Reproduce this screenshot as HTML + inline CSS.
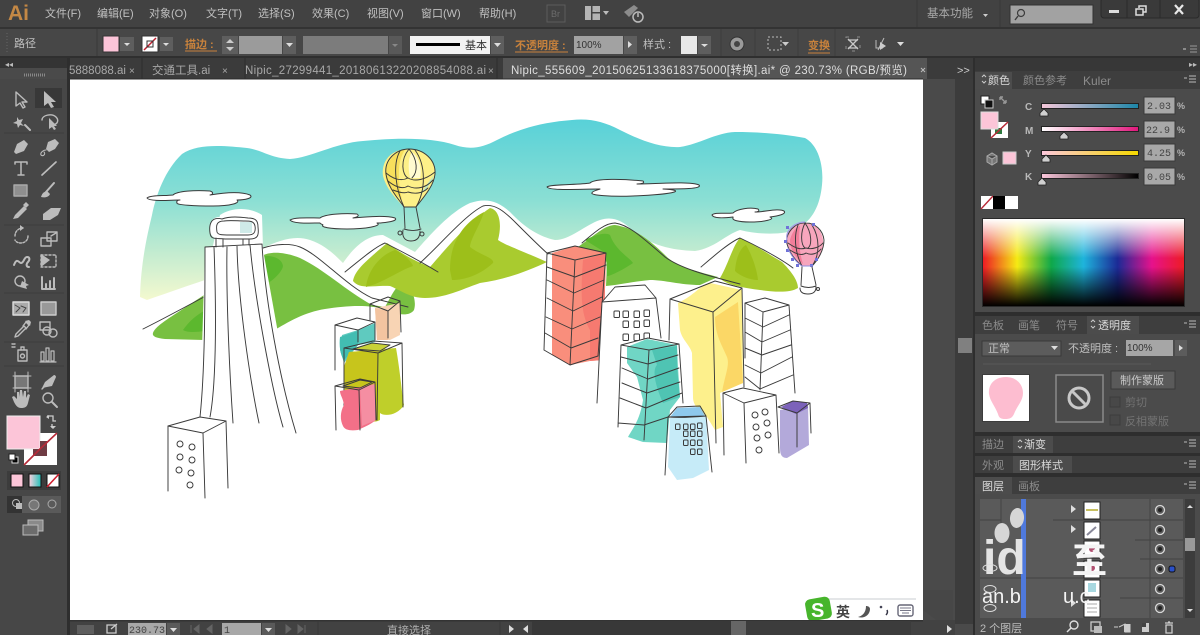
<!DOCTYPE html>
<html><head><meta charset="utf-8"><style>
html,body{margin:0;padding:0;background:#484848;width:1200px;height:635px;overflow:hidden}
svg{display:block;position:absolute;left:0;top:0;filter:blur(.35px)}
text{font-family:"Liberation Sans","Noto Sans CJK SC",sans-serif}
.m{font-size:11px;fill:#c0c0c0}
.o{font-size:11px;fill:#c8823c;font-weight:bold}
.t{font-size:11.5px;fill:#a8a8a8}
.p{font-size:11px;fill:#8c8c8c}
.a{font-size:11px;fill:#dcdcdc}
.n{font-family:"Liberation Mono","Noto Sans CJK SC",monospace;font-size:10px;fill:#444}
.ln{fill:none;stroke:#3a3a3a;stroke-width:.95;stroke-linejoin:round;stroke-linecap:round}
.ic{fill:none;stroke:#bcbcbc;stroke-width:1.4;stroke-linejoin:round;stroke-linecap:round}
.if{fill:#bcbcbc;stroke:none}
</style></head><body>
<svg width="1200" height="635" viewBox="0 0 1200 635" xmlns="http://www.w3.org/2000/svg">
<defs>
<linearGradient id="sky" x1="0" y1="0" x2="0" y2="1"><stop offset="0" stop-color="#58d1d8"/><stop offset=".45" stop-color="#8bdfd4"/><stop offset=".75" stop-color="#c5ecd0"/><stop offset="1" stop-color="#f4f9cf"/></linearGradient>
<linearGradient id="hue" x1="0" y1="0" x2="1" y2="0"><stop offset="0" stop-color="#ed1c24"/><stop offset=".17" stop-color="#f5ea14"/><stop offset=".34" stop-color="#0fa84a"/><stop offset=".5" stop-color="#1eb4dc"/><stop offset=".67" stop-color="#1c2a96"/><stop offset=".84" stop-color="#e6128c"/><stop offset="1" stop-color="#ed1c24"/></linearGradient>
<linearGradient id="lt" x1="0" y1="0" x2="0" y2="1"><stop offset="0" stop-color="#fff"/><stop offset=".45" stop-color="#fff" stop-opacity="0"/><stop offset=".55" stop-color="#000" stop-opacity="0"/><stop offset="1" stop-color="#000"/></linearGradient>
<linearGradient id="sc" x1="0" y1="0" x2="1" y2="0"><stop offset="0" stop-color="#f6c8da"/><stop offset="1" stop-color="#1c86a8"/></linearGradient>
<linearGradient id="sm" x1="0" y1="0" x2="1" y2="0"><stop offset="0" stop-color="#fff"/><stop offset="1" stop-color="#e0187c"/></linearGradient>
<linearGradient id="sy" x1="0" y1="0" x2="1" y2="0"><stop offset="0" stop-color="#fcc8dc"/><stop offset="1" stop-color="#f5d800"/></linearGradient>
<linearGradient id="sk" x1="0" y1="0" x2="1" y2="0"><stop offset="0" stop-color="#fcc8dc"/><stop offset="1" stop-color="#000"/></linearGradient>
<linearGradient id="tm" x1="0" y1="0" x2="1" y2="0"><stop offset="0" stop-color="#fdd0df"/><stop offset="1" stop-color="#21c0b8"/></linearGradient>
</defs>

<!-- base -->
<rect width="1200" height="635" fill="#4a4a4a"/>
<rect width="1200" height="27" fill="#424242"/>
<rect y="27" width="1200" height="2" fill="#333"/>
<rect y="29" width="1200" height="27" fill="#474747"/>
<rect y="56" width="1200" height="2" fill="#2f2f2f"/>
<rect y="58" x="68" width="907" height="21" fill="#3b3b3b"/>
<rect x="0" y="58" width="68" height="577" fill="#474747"/>
<rect x="0" y="58" width="68" height="10" fill="#343434"/>
<rect x="0" y="68" width="68" height="11" fill="#4a4a4a"/>
<rect x="67" y="58" width="3" height="577" fill="#2e2e2e"/>

<!-- menu -->
<text x="8" y="20" font-size="21" font-weight="bold" fill="#c48845">Ai</text>
<text class="m" x="45" y="17">文件(F)</text><text class="m" x="97" y="17">编辑(E)</text><text class="m" x="149" y="17">对象(O)</text><text class="m" x="206" y="17">文字(T)</text><text class="m" x="258" y="17">选择(S)</text><text class="m" x="312" y="17">效果(C)</text><text class="m" x="367" y="17">视图(V)</text><text class="m" x="421" y="17">窗口(W)</text><text class="m" x="479" y="17">帮助(H)</text>
<rect x="547" y="5" width="18" height="17" fill="none" stroke="#5c5c5c"/><text x="551" y="17" font-size="9" fill="#6c6c6c">Br</text>
<rect x="585" y="6" width="15" height="14" fill="#b4b4b4"/><rect x="591" y="6" width="1.500" height="14" fill="#444"/><rect x="592" y="12" width="8" height="1.500" fill="#444"/><path d="M603 11h6l-3 4z" fill="#bbb"/>
<path d="M624 12l10-7 4 3-9 9z" fill="#8c8c8c"/><circle cx="638" cy="17" r="5" fill="none" stroke="#bbb" stroke-width="1.500"/><path d="M638 13v4" stroke="#bbb" stroke-width="1.500"/>
<path d="M917 0v27M1000 0v27" stroke="#383838"/>
<text class="t" x="927" y="17">基本功能</text><path d="M983 14h5l-2.500 3z" fill="#ccc"/>
<rect x="1010" y="5" width="83" height="19" fill="#a2a2a2" stroke="#333"/><circle cx="1021" cy="13" r="3.500" fill="none" stroke="#3c3c3c" stroke-width="1.200"/><path d="M1018 16l-3 4" stroke="#3c3c3c" stroke-width="1.400"/>
<rect x="1101" y="-2" width="98" height="20" rx="3" fill="#3a3a3a" stroke="#2a2a2a"/><path d="M1127 0v18M1160 0v18" stroke="#2a2a2a"/>
<rect x="1109" y="10" width="10" height="3" fill="#ddd"/>
<rect x="1136" y="9" width="7" height="6" fill="none" stroke="#ddd" stroke-width="1.500"/><path d="M1139 8v-2h7v6h-3" fill="none" stroke="#ddd" stroke-width="1.500"/>
<path d="M1175 5l8 9M1183 5l-8 9" stroke="#e8e8e8" stroke-width="2.200"/>

<!-- control bar -->
<path d="M7 33v20" stroke="#666" stroke-dasharray="1 2"/>
<text class="m" x="14" y="47">路径</text>
<path d="M97 29v27" stroke="#3a3a3a"/>
<rect x="103" y="36" width="16" height="16" fill="#fcc4d8" stroke="#333"/><rect x="120" y="37" width="14" height="14" fill="#5e5e5e"/><path d="M124 43h6l-3 3z" fill="#ddd"/>
<rect x="142" y="36" width="16" height="16" fill="#fff" stroke="#333"/><path d="M144 50l12-12" stroke="#c02030" stroke-width="1.500"/><path d="M147 41h6v6h-6z" fill="none" stroke="#333"/><rect x="160" y="37" width="13" height="14" fill="#5e5e5e"/><path d="M163 43h6l-3 3z" fill="#ddd"/>
<text class="o" x="185" y="48">描边 :</text><path d="M185 51h32" stroke="#c8823c"/>
<rect x="222" y="36" width="16" height="18" fill="#5e5e5e"/><path d="M226 43l4-4 4 4zM226 47l4 4 4-4z" fill="#ccc"/>
<rect x="239" y="36" width="43" height="18" fill="#9b9b9b"/><rect x="283" y="36" width="13" height="18" fill="#5e5e5e"/><path d="M286 43h7l-3.500 4z" fill="#ddd"/>
<rect x="303" y="36" width="85" height="18" fill="#7c7c7c"/><rect x="389" y="36" width="13" height="18" fill="#595959"/><path d="M392 44h6l-3 3z" fill="#888"/>
<rect x="410" y="36" width="80" height="18" fill="#f2f2f2"/><rect x="416" y="43" width="44" height="3" fill="#000"/><text x="465" y="49" font-size="11" fill="#333">基本</text>
<rect x="491" y="36" width="13" height="18" fill="#5e5e5e"/><path d="M494 43h7l-3.500 4z" fill="#ddd"/>
<text class="o" x="515" y="49">不透明度 :</text><path d="M515 52h53" stroke="#c8823c"/>
<rect x="574" y="36" width="49" height="18" fill="#a2a2a2"/><text x="576" y="48" font-size="10" fill="#333">100%</text><rect x="624" y="36" width="13" height="18" fill="#5e5e5e"/><path d="M628 41v7l4-3.500z" fill="#ddd"/>
<text class="m" x="643" y="48">样式 :</text>
<rect x="681" y="36" width="16" height="18" fill="#e8e8e8"/><rect x="698" y="36" width="13" height="18" fill="#5e5e5e"/><path d="M701 44h7l-3.500 3z" fill="#ddd"/>
<path d="M721 29v27M755 29v27M798 29v27M835 29v27" stroke="#3e3e3e"/>
<circle cx="737" cy="44" r="7" fill="#9a9a9a" stroke="#333"/><circle cx="737" cy="44" r="3" fill="#444"/>
<rect x="768" y="37" width="13" height="13" fill="none" stroke="#bbb" stroke-dasharray="2 2"/><path d="M782 42h7l-3.500 4z" fill="#ccc"/>
<text x="808" y="49" font-size="11" font-weight="bold" fill="#c8823c">变换</text><path d="M808 53h22" stroke="#c8823c"/>
<path d="M848 39l10 10M858 39l-10 10M848 40h10M848 48h10" stroke="#c8c8c8" stroke-width="1.300" fill="none"/><rect x="846" y="37" width="14" height="14" fill="none" stroke="#8c8c8c" stroke-dasharray="3 8"/>
<path d="M876 40v8h7M884 38l-6 12" stroke="#bbb" fill="none"/><path d="M880 42l6 4-6 4z" fill="#ccc"/><path d="M897 42h7l-3.500 4z" fill="#ddd"/>
<path d="M1190 46h7M1190 49h7M1190 52h7" stroke="#999"/><path d="M1183 49h3" stroke="#ccc"/>

<!-- tabs -->
<text x="5" y="67" font-size="8" fill="#bbb">◂◂</text>
<path d="M24 75h22" stroke="#888" stroke-dasharray="1 1" stroke-width="3"/>
<rect x="503" y="58" width="424" height="21" fill="#555"/>
<path d="M142 58v21M245 58v21M497 58v21" stroke="#2e2e2e"/>
<text class="t" x="69" y="74">5888088.ai</text><text x="129" y="74" font-size="10" fill="#aaa">×</text>
<text class="t" x="152" y="74">交通工具.ai</text><text x="222" y="74" font-size="10" fill="#aaa">×</text>
<text class="t" x="245" y="74" textLength="241">Nipic_27299441_20180613220208854088.ai</text><text x="488" y="74" font-size="10" fill="#aaa">×</text>
<text x="511" y="74" font-size="11.500" fill="#dedede" textLength="396">Nipic_555609_20150625133618375000[转换].ai* @ 230.73% (RGB/预览)</text>
<path d="M921 68l4 4M925 68l-4 4" stroke="#bbb"/>
<text x="957" y="74" font-size="11" fill="#ccc">&gt;&gt;</text>

<!-- canvas -->
<rect x="70" y="79" width="853" height="541" fill="#fff"/>
<rect x="70" y="78" width="853" height="2" fill="#2c2c2c" opacity=".5"/>
<path d="M923 79h32v546h-12l-20-15z" fill="#4a4a4a"/>
<rect x="955" y="79" width="18" height="545" fill="#3c3c3c"/>
<rect x="958" y="338" width="14" height="15" fill="#808080"/>
<path d="M923 590v20l20 15h10V590z" fill="#474747"/>

<!-- artwork -->
<path fill="url(#sky)" d="M140 297C141 260 148 232 152 215C156 195 165 170 182 154C198 143 226 146 247 148C262 150 270 158 290 159C310 158 335 143 363 141C395 138 430 137 455 145C470 150 482 148 497 140C520 128 545 122 572 120C590 118 605 122 620 130C640 140 660 148 680 147C700 144 715 133 735 132C760 132 785 134 805 138C818 145 824 165 822 185C820 205 813 220 797 229C785 235 760 235 740 230C725 235 715 248 695 251C670 250 650 245 632 230C622 220 612 216 600 220C585 225 570 240 555 240C540 237 525 228 510 212C497 200 485 198 470 203C450 212 430 235 415 252L383 235C365 235 352 250 343 263C335 255 325 245 310 240C295 235 280 240 263 248L262 215C250 207 232 207 220 215L205 280C190 285 170 292 147 300Z"/>
<path fill="#78c041" d="M153 333C156 325 170 318 204 295L204 340L165 339C155 338 152 336 153 333ZM262 256C270 251 285 252 300 258C325 270 345 290 372 305L385 307C392 295 396 285 403 283C412 287 417 300 414 310C410 316 400 315 392 312C375 304 350 305 325 309C305 312 288 322 273 331Z"/>
<path fill="#5cb82e" d="M183 330C190 320 197 315 204 311V331C197 332 188 333 183 330ZM262 256C272 255 282 258 283 266C282 273 270 283 264 285Z"/>
<path fill="#a9cb2f" d="M353 281C355 270 365 262 387 243C395 248 405 257 430 267C445 250 465 225 490 208C500 210 502 225 498 240C505 245 520 250 547 262C530 270 505 280 480 283C460 290 445 298 425 298C410 298 400 290 390 286C375 285 360 290 353 281Z"/>
<path fill="#9dbf1a" d="M366 287C368 270 380 255 395 250C405 255 412 262 413 266C400 270 385 282 366 287ZM450 270C450 240 465 222 484 212C480 225 470 240 470 247C480 255 495 258 493 263C480 275 465 280 452 280Z"/>
<path fill="#78c041" d="M578 247C595 235 605 225 615 225C635 228 650 240 668 258C680 268 700 272 718 277L700 285C680 285 665 280 650 280C630 282 618 285 606 286L607 262Z"/>
<path fill="#5cb82e" d="M585 240C595 235 605 232 610 235C615 250 630 258 633 263C620 272 607 277 607 276L606 253Z"/>
<path fill="#a9cb2f" d="M720 278C728 265 733 245 740 238C755 245 770 255 782 262C790 270 798 280 798 288C790 293 775 292 760 290C745 288 725 285 720 278Z"/>
<path fill="#9dbf1a" d="M735 271C736 258 740 248 746 245C752 255 757 270 758 280C750 280 740 276 735 271Z"/>

<!-- mountain lines -->
<path class="ln" d="M143 329C165 318 185 307 204 297M263 248C275 244 290 243 300 247C320 255 345 285 372 298L408 307"/>
<path class="ln" d="M345 272C360 260 375 247 385 243C395 248 415 258 438 272M420 263C440 245 465 215 483 206C495 203 505 212 516 223C525 232 540 247 548 254"/>
<path class="ln" d="M582 243C595 232 605 223 615 223C630 225 645 240 665 257C680 268 705 275 740 284"/>
<path class="ln" d="M701 267C715 255 730 242 740 238C755 245 780 258 793 268"/>

<!-- clouds -->
<g fill="#fff" stroke="#3a3a3a" stroke-linejoin="round">
<path d="M147 198C150 195 165 196 173 195C177 191 195 190 210 191C213 192 214 194 210 195C222 193 240 191 250 195C254 198 245 200 237 200C241 203 230 206 213 206C195 206 176 205 177 203C176 201 178 200 180 200C170 200 150 202 147 198Z"/>
<path d="M290 220C295 217 310 218 320 218C325 214 345 213 357 214C360 216 357 217 353 218C365 217 385 215 395 218C399 221 385 223 377 223C383 226 365 229 347 229C330 229 320 227 323 225C322 224 320 224 320 223C310 223 293 224 290 220Z"/>
<path d="M547 187C550 184 580 185 590 183C595 178 625 179 643 181C645 183 642 184 637 184C655 184 690 181 699 185C703 189 680 189 663 189C685 190 680 194 633 196C610 197 590 195 592 193C592 191 598 190 600 189C580 189 550 191 547 187Z"/>
<path d="M712 215C715 212 725 214 733 213C737 209 750 207 758 209C760 211 758 212 755 212C765 212 778 208 784 211C787 214 778 216 770 217C776 219 765 222 750 222C738 222 732 220 733 218C733 217 733 217 733 217C725 218 714 219 712 215Z"/>
</g>

<!-- tower -->
<path d="M205 247L262 244L296 433L200 417Z" fill="#fff"/>
<rect x="210" y="217" width="49" height="22" rx="9" fill="#fff"/>
<path d="M240 222H252V233H240Z" fill="#cfeae8"/>
<path class="ln" d="M222 219C210 216 209 226 210 233C211 240 215 238 225 239H250C258 239 259 235 258 227C258 220 255 218 248 218C240 217 230 216 222 219Z"/>
<path class="ln" d="M224 221C216 221 216 226 217 232C218 235 222 235 230 235H248C254 235 256 232 255 226C254 221 250 221 245 221C238 221 230 220 224 221Z"/>
<path class="ln" d="M216 238V247M223 239V247M243 239V245M249 239V245"/>
<path class="ln" d="M205 247L262 244M205 247C205 300 205 370 200 417M214 247C216 300 217 380 210 417M227 247C226 300 230 380 233 423M237 246C238 300 250 380 259 423M250 245C255 300 272 390 283 427M262 244C265 300 280 380 296 433"/>
<path class="ln" d="M168 426L200 417L226 421L203 433Z" style="fill:#fff"/>
<path class="ln" d="M168 426V491M203 433L205 498M226 421L228 488"/>
<g class="ln"><circle cx="180" cy="444" r="3"/><circle cx="192" cy="447" r="3"/><circle cx="180" cy="457" r="3"/><circle cx="192" cy="460" r="3"/><circle cx="179" cy="470" r="3"/><circle cx="191" cy="473" r="3"/><circle cx="190" cy="485" r="3"/></g>

<!-- small left buildings -->
<path fill="#f8d4b4" d="M375 308L400 303L400 335L390 340L377 340Z"/><path fill="#f3c4a0" d="M375 308L388 311V340H377Z"/>
<path class="ln" d="M370 304L388 297L400 301L388 311ZM370 304V320M388 311V338M400 301L401 332"/>
<path fill="#5fcabf" d="M342 335L358 330L375 323V342L358 345L344 363L340 350Z"/><path fill="#42bdb2" d="M340 337L358 331V345L344 360C340 355 339 345 340 337Z"/>
<path class="ln" d="M335 325L357 318L375 322L358 330ZM335 325V370M358 330V342M375 322V340"/>
<path fill="#bfcf2a" d="M344 367L349 352L396 348C400 370 402 395 404 405C398 415 385 417 380 413L380 420C372 424 372 420 370 415L345 395Z"/><path fill="#c7c51c" d="M344 367L349 352L378 350V420L370 415L345 395Z"/>
<path fill="#c9d238" d="M352 349L373 343L390 345L380 352Z"/>
<path class="ln" d="M344 348L373 341L402 343L378 353ZM353 349L372 343L390 345L380 351ZM344 348V410M378 353L377 420M402 343L403 407"/>
<path fill="#f37088" d="M340 391L375 384L376 420C370 425 362 428 358 430C350 431 345 430 343 426C340 420 340 412 344 405C343 398 340 395 340 391Z"/><path fill="#f58ea2" d="M360 388L375 384L376 420L362 426Z"/>
<path class="ln" d="M335 386L360 379L375 382L359 390ZM343 386L360 380L372 382L360 388ZM335 386L336 430M359 390L360 430M375 382L376 420"/>

<!-- red building -->
<path fill="#f98e7c" d="M552 253L575 246L606 253L603 360L590 361L570 365L552 355Z"/><path fill="#f67a70" d="M583 260L606 253L603 360L590 361L590 330C582 315 580 300 583 260Z"/>
<path class="ln" d="M547 253L575 246L606 253L575 260ZM547 253L544 350M575 260L570 365M606 253L598 356M547 267L575 277L606 265M547 280L574 293L604 280M547 298L573 311L602 297M546 317L572 329L600 317M545 333L571 348L598 338M544 350L570 365L598 356"/>

<!-- white building windows -->
<path fill="#fff" d="M602 302L615 287L645 285L656 298L661 340H620L597 403Z"/>
<path class="ln" d="M602 302L615 287L645 285L656 298L661 338M602 302L656 298M602 302L597 403"/>
<g fill="none" stroke="#3a3a3a"><rect x="614" y="311" width="5.500" height="6.500" rx="1"/><rect x="623" y="311" width="5.500" height="6.500" rx="1"/><rect x="634" y="311" width="5.500" height="6.500" rx="1"/><rect x="644" y="310" width="5.500" height="6.500" rx="1"/><rect x="623" y="321" width="5.500" height="6.500" rx="1"/><rect x="634" y="321" width="5.500" height="6.500" rx="1"/><rect x="644" y="320" width="5.500" height="6.500" rx="1"/><rect x="623" y="334" width="5.500" height="6.500" rx="1"/><rect x="634" y="334" width="5.500" height="6.500" rx="1"/><rect x="644" y="333" width="5.500" height="6.500" rx="1"/></g>

<!-- yellow building -->
<path fill="#fdf08c" d="M678 303C695 295 700 285 710 283L742 290L743 383L720 393L723 427L715 430L707 417C698 410 693 405 693 397L692 353C690 345 682 340 680 330Z"/>
<path fill="#fbd766" d="M715 317L738 302L743 383L722 392C725 375 730 365 727 357C722 345 715 335 715 317Z"/>
<path class="ln" d="M670 299L715 281L742 288L713 312ZM670 299L669 340M713 312L716 443M742 288L744 387"/>

<!-- teal building -->
<path fill="#fff" d="M621 345L648 338L679 344L683 403L668 417L644 440L618 427Z"/>
<path fill="#70d6c5" d="M627 347L647 339L677 345L678 367L680 397L670 410L667 443L643 442L628 437C633 428 640 420 643 400L637 377L627 363Z"/>
<path fill="#4fc4b3" d="M652 350L677 346L677 367L680 397L663 403C655 385 652 370 657 365Z"/>
<path class="ln" d="M621 345L648 338L679 344L649 350ZM621 345L618 427M649 350L644 440M679 344L683 403M621 357L648 364L678 355M622 368L648 379L679 368M622 383L647 393L680 382M620 398L646 408L682 393M618 423L644 425L668 417"/>

<!-- stripe building -->
<path class="ln" d="M745 303L765 298L789 305L763 312ZM789 305L795 393M763 312L760 390M745 303V358M745 318L763 327L789 315M745 332L762 342L790 330M745 348L762 355L791 345M745 365L761 373L792 357M745 377L760 389L793 375"/>

<!-- purple -->
<path fill="#b3a9da" d="M780 410L808 405L809 445L787 458C780 458 780 452 780 445Z"/>
<path fill="#7c62ba" d="M781 407L793 401L807 403L808 408L796 414Z"/>
<path class="ln" d="M778 407L793 401L810 403L797 413ZM810 403L811 433M797 413V447"/>

<!-- white circle building -->
<path fill="#fff" d="M723 393L743 388L776 395L779 453L746 463L724 455Z"/>
<path class="ln" d="M723 393L743 388L776 395L744 403ZM723 393L724 455M744 403L746 463M776 395L779 453"/>
<g class="ln"><circle cx="765" cy="412" r="3"/><circle cx="755" cy="415" r="3"/><circle cx="767" cy="423" r="3"/><circle cx="756" cy="427" r="3"/><circle cx="768" cy="435" r="3"/><circle cx="757" cy="438" r="3"/><circle cx="759" cy="450" r="3"/></g>

<!-- blue -->
<path fill="#c6ebf8" d="M670 418L706 416L709 470L693 478L677 480L668 467Z"/>
<path fill="#8ec9ec" d="M670 417L677 408L700 407L705 416Z"/>
<path class="ln" d="M668 417L677 407L700 406L706 416ZM668 417C680 418 695 417 706 416M668 417L665 475M706 416L712 472"/>
<g fill="none" stroke="#3a3a3a"><rect x="675.500" y="424" width="4.500" height="5.500" rx="1"/><rect x="683.500" y="424" width="4.500" height="5.500" rx="1"/><rect x="690.500" y="424" width="4.500" height="5.500" rx="1"/><rect x="697.500" y="423" width="4.500" height="5.500" rx="1"/><rect x="683.500" y="431" width="4.500" height="5.500" rx="1"/><rect x="690.500" y="431" width="4.500" height="5.500" rx="1"/><rect x="697.500" y="431" width="4.500" height="5.500" rx="1"/><rect x="683.500" y="440" width="4.500" height="5.500" rx="1"/><rect x="690.500" y="440" width="4.500" height="5.500" rx="1"/><rect x="697.500" y="440" width="4.500" height="5.500" rx="1"/><rect x="690.500" y="449" width="4.500" height="5.500" rx="1"/><rect x="697.500" y="449" width="4.500" height="5.500" rx="1"/></g>

<!-- balloon 1 -->
<path fill="#fdf088" d="M409 149C390 149 381 162 383 176C386 188 395 198 404 207H416C424 198 434 186 435 174C436 160 425 149 409 149Z"/>
<path fill="#f8df5c" d="M385 172C388 158 398 150 405 150C398 160 397 175 402 200C392 192 385 182 385 172Z"/>
<path fill="#fffbd0" d="M412 152C420 158 422 170 420 178L410 178C408 168 408 158 412 152Z"/>
<path fill="#b8e8c8" d="M420 195C426 190 432 182 434 175L428 183Z"/>
<path class="ln" d="M409 149C396 149 384 160 386 174C388 188 398 198 404 207H416C423 198 434 186 435 174C436 160 424 149 409 149Z"/>
<path class="ln" d="M400 151C392 165 396 190 404 207M415 150C426 165 426 190 416 207M409 149C400 160 402 175 408 178M409 149C418 160 418 172 412 178"/>
<path class="ln" d="M386 173C392 178 400 182 408 178C415 182 425 180 435 172M388 181C394 186 402 190 408 186C416 190 426 188 433 180M393 190C398 192 404 194 408 192C414 194 422 194 428 188"/>
<path class="ln" d="M404 207L405 228M416 207L420 228M404 229C410 231 416 231 421 229M403 230C402 236 404 241 411 241C417 241 420 238 420 231"/>
<circle cx="400" cy="233" r="2" fill="none" stroke="#3a3a3a"/><circle cx="422" cy="234" r="2" fill="none" stroke="#3a3a3a"/>

<!-- balloon 2 -->
<path fill="#f7a6bd" d="M803 223C791 224 785 235 787 244C790 254 796 261 802 266H812C818 260 824 250 823 240C822 230 815 223 803 223Z"/>
<path fill="#f27e9a" d="M790 240C792 232 797 226 800 226C798 240 800 255 803 264C796 258 790 250 790 240Z"/>
<path class="ln" d="M806 223C795 222 785 233 787 244C790 254 796 261 802 266H812C818 260 824 250 824 240C823 230 815 223 806 223Z"/>
<path class="ln" d="M798 225C793 238 796 255 802 266M812 225C820 238 820 255 812 266M805 223C800 233 801 245 805 248M805 223C812 233 812 245 808 248M788 243C795 248 800 250 806 248C812 250 820 247 823 243M790 250C796 254 802 256 806 253C812 256 818 253 821 249"/>
<g fill="#6f72d8"><rect x="784" y="240" width="3" height="3"/><rect x="786" y="249" width="3" height="3"/><rect x="791" y="258" width="3" height="3"/><rect x="796" y="264" width="3" height="3"/><rect x="810" y="264" width="3" height="3"/><rect x="815" y="258" width="3" height="3"/><rect x="786" y="226" width="3" height="3"/><rect x="812" y="223" width="3" height="3"/></g>
<path d="M787 240C785 230 795 222 805 222" fill="none" stroke="#a79ce8" stroke-width="1.200"/>
<path d="M788 248C791 256 797 263 802 266H813" fill="none" stroke="#8f8fe0" stroke-width="1"/>
<path class="ln" d="M802 267L801 285M812 267L816 285M801 286C806 288 811 288 816 286M800 288C800 292 803 294 808 294C813 294 816 292 816 287"/>
<circle cx="818" cy="289" r="1.500" fill="none" stroke="#3a3a3a"/>

<!-- IME -->
<rect x="806" y="600" width="117" height="20" fill="#fff"/>
<path d="M826 599h90" stroke="#c8ccd0"/>
<rect x="806" y="598" width="25" height="22" rx="5" fill="#47b52c" transform="rotate(-10 818 609)"/>
<text x="811" y="617" font-size="20" font-weight="bold" fill="#fff">S</text>
<text x="836" y="617" font-size="14" font-weight="bold" fill="#444">英</text>
<path d="M866 606C866 613 862 616 858 617C864 619 870 615 870 609C870 607 868 606 866 606Z" fill="#555"/>
<circle cx="881" cy="607" r="1.300" fill="#445"/><path d="M887 610c1 2 0 4-1 5" stroke="#334" stroke-width="1.500" fill="none"/>
<rect x="898" y="605" width="15" height="11" rx="2" fill="none" stroke="#667" stroke-width="1.400"/><path d="M900 608h11M900 610.500h11M902 613h7" stroke="#778"/>

<!-- status -->
<rect x="70" y="620" width="885" height="15" fill="#424242"/>
<rect x="70" y="620" width="853" height="1.500" fill="#333"/>
<rect x="77" y="625" width="17" height="9" fill="#5e5e5e"/>
<path d="M107 625h9v8h-9zM111 629l6-5" stroke="#ccc" fill="none" stroke-width="1.300"/>
<rect x="128" y="623" width="38" height="12" fill="#a8a8a8"/><text class="n" x="129" y="633" textLength="36">230.73</text>
<rect x="167" y="623" width="13" height="12" fill="#5a5a5a"/><path d="M170 628h7l-3.500 4z" fill="#ddd"/>
<path d="M191 625v8M199 625l-5 4 5 4zM212 625l-5 4 5 4z" fill="#646464" stroke="#646464"/>
<rect x="222" y="623" width="39" height="12" fill="#a8a8a8"/><text class="n" x="224" y="633">1</text>
<rect x="262" y="623" width="13" height="12" fill="#5a5a5a"/><path d="M265 628h7l-3.500 4z" fill="#ddd"/>
<path d="M286 625l5 4-5 4zM298 625l5 4-5 4zM305 625v8" fill="#646464" stroke="#646464"/>
<path d="M318 621v14M500 621v14" stroke="#383838"/>
<text x="387" y="634" font-size="11" fill="#b0b0b0">直接选择</text>
<path d="M509 625l5 4-5 4z" fill="#ddd"/><path d="M528 625l-5 4 5 4z" fill="#ddd"/>
<rect x="532" y="621" width="200" height="14" fill="#383838"/>
<rect x="731" y="621" width="15" height="14" fill="#666"/>
<path d="M746 621h165v14H746z" fill="#3c3c3c"/>
<path d="M947 625v8l5-4z" fill="#ddd"/>

<!-- toolbox -->
<rect x="35" y="88" width="27" height="20" fill="#383838"/>
<path d="M4 133h60M4 225h60M4 293h60M4 342h60M4 366h60" stroke="#3d3d3d"/>
<g class="ic">
<path d="M16 92v14l4-3 3 5 2-1-3-5h5z"/>
<path class="if" d="M44 91v15l4-3 3 5 3-1-3-5h5z"/>
<path class="if" d="M17 117l2 3 4-1-2 4 3 3-4-1-2 3-1-4-4-1 4-2z"/>
<path d="M25 125l5 5" stroke-width="2"/>
<path d="M42 120c0-5 10-7 14-3 3 3 2 7-3 8"/><path class="if" d="M49 118v11l3-2 2 3 2-1-2-3h3z"/>
<path class="if" d="M14 152l3-8 7-4 4 4-4 7-8 3zM14 154l3-3"/>
<path class="if" d="M46 149l2-7 7-3 4 4-4 6-6 3z"/><path d="M46 150c-3 0-6 3-5 5 2 2 5-1 3-3" stroke-width="1.100"/>
<path d="M15 162h12M21 162v12M18 175h6M15 162v2M27 162v2" stroke-width="1.500"/>
<path d="M42 175l14-13" stroke-width="1.700"/>
<rect x="14" y="185" width="13" height="11" fill="#8f8f8f" stroke="#aaa"/>
<path d="M54 183l-8 9" stroke-width="2"/><path class="if" d="M41 197c1-3 2-5 6-6l3 3c-1 3-5 4-9 3z"/>
<path class="if" d="M13 219l2-4 9-9 3 3-9 9z"/><path class="if" d="M23 205l3-3 3 3-3 3z"/>
<path class="if" d="M43 214l8-6h10l-3 7-8 5h-7z"/>
<path d="M15 236c0-5 4-8 8-8M28 236c0 4-3 7-7 7-3 0-5-1-6-3" stroke-dasharray="2 1.500"/><path class="if" d="M20 225l4 3-4 3z"/>
<rect x="47" y="232" width="10" height="9"/><rect x="41" y="238" width="10" height="8"/><path d="M51 236l5-3"/>
<path d="M14 265c3-8 5-2 7-2 3 0 3-6 6-6s3 3 1 5-2 5 1 5" stroke-width="2"/>
<rect x="41" y="255" width="15" height="12" stroke-dasharray="2 2"/><path class="if" d="M41 254l9 6-9 7z"/>
<circle cx="20" cy="281" r="5"/><path class="if" d="M22 281l7 4-3 1 1 3-7-2z"/>
<path d="M42 277v12h13M46 284v5M50 281v8M54 278v11" stroke-width="2"/>
<rect x="13" y="302" width="16" height="13" fill="#aaa" stroke="#ddd"/><path d="M15 305l5 3-4 4M21 306l5 2-3 4" stroke="#444" stroke-width="1"/>
<rect x="41" y="302" width="15" height="13" fill="#999" stroke="#ccc"/>
<path d="M16 334l8-8 2 2-8 8-3 1zM23 326l3-4 3 3-3 4"/><path class="if" d="M25 321l4-1 2 2-1 4z"/>
<rect x="40" y="322" width="10" height="8"/><circle cx="47" cy="331" r="4"/><circle cx="53" cy="333" r="4"/>
<rect x="18" y="350" width="9" height="11"/><circle cx="22.500" cy="356" r="2"/><path d="M21 350v-3h3v3M12 347h4M12 344h3" stroke-dasharray="1 1"/>
<path d="M41 361v-9h3v9zM46 361v-13h3v13zM51 361v-10h3v10zM40 362h16" stroke-width="1.200"/>
<rect x="15" y="376" width="13" height="12" fill="#777"/><path d="M13 376h18M13 388h18M15 372v20M28 372v20" stroke-width="1"/>
<path class="if" d="M42 388l3-6 9-7c1 0 2 1 2 2l-4 9z"/><path d="M42 389l3-3"/>
<path class="if" d="M14 402l-2-5 2-1 3 3v-7h2v5l1-7h2l1 7 1-6h2v7l2-4 2 1-2 8c-1 4-3 5-7 5-3 0-5-2-7-6z"/>
<circle cx="48" cy="398" r="5"/><path d="M52 402l5 5" stroke-width="2"/>
</g>
<rect x="7" y="416" width="33" height="33" fill="#fcc5d8" stroke="#eee"/>
<rect x="24" y="433" width="33" height="32" fill="#fff"/>
<rect x="7" y="416" width="33" height="33" fill="#fcc5d8" stroke="#eee"/>
<rect x="33" y="449" width="14" height="7" fill="#6f3c44"/><rect x="40" y="441" width="7" height="8" fill="#6f3c44"/>
<path d="M24 465l16-16M40 449l17-16" stroke="#b82a38" stroke-width="1.600"/>
<path d="M47 416h6v5h3M52 424v4" stroke="#ccc" fill="none" stroke-width="1.300"/><path d="M49 415l-3 2 3 2zM50 426l3 3 3-3z" fill="#ccc"/>
<rect x="12" y="457" width="6" height="6" fill="#000" stroke="#ddd"/><rect x="9" y="454" width="6" height="6" fill="#fff" stroke="#222"/>
<rect x="7" y="471" width="54" height="19" fill="#3c3c3c"/>
<rect x="11" y="474" width="12" height="13" fill="#fcc5d8" stroke="#111"/>
<rect x="29" y="474" width="12" height="13" fill="url(#tm)" stroke="#111"/>
<rect x="47" y="474" width="12" height="13" fill="#fff" stroke="#111"/><path d="M47 487l12-13" stroke="#d02030" stroke-width="1.600"/>
<rect x="7" y="496" width="15" height="17" fill="#333"/><rect x="22" y="496" width="39" height="17" fill="#5a5a5a"/>
<circle cx="16" cy="503" r="3.500" fill="none" stroke="#bbb"/><rect x="16" y="503" width="6" height="6" fill="#bbb"/>
<circle cx="34" cy="505" r="5" fill="#777" stroke="#aaa"/><circle cx="52" cy="504" r="4" fill="none" stroke="#aaa"/>
<rect x="28" y="520" width="15" height="11" fill="#8a8a8a" stroke="#bbb"/><rect x="23" y="525" width="15" height="10" fill="#6c6c6c" stroke="#bbb"/>

<!-- right panels -->
<rect x="973" y="56" width="227" height="579" fill="#2e2e2e"/>
<rect x="975" y="58" width="225" height="13" fill="#373737"/>
<text x="1189" y="67" font-size="8" fill="#bbb">▸▸</text>
<rect x="975" y="71" width="225" height="18" fill="#3e3e3e"/>
<rect x="975" y="72" width="37" height="18" fill="#4c4c4c"/>
<rect x="975" y="89" width="225" height="223" fill="#4b4b4b"/>
<path d="M982 77l2-2 2 2M982 81l2 2 2-2" stroke="#ccc" fill="none"/>
<text class="a" x="988" y="84">颜色</text><text class="p" x="1023" y="84">颜色参考</text><text class="p" x="1083" y="85" style="font-size:12px">Kuler</text>
<path d="M1184 78h3M1189 76h7M1189 79h7M1189 82h7" stroke="#bbb"/>

<rect x="981" y="96" width="8" height="8" fill="#fff" stroke="#222"/><rect x="985" y="100" width="8" height="8" fill="#111" stroke="#ccc"/>
<path d="M1000 97l6 6M1000 97h3M1000 97v3M1006 103h-3M1006 103v-3" stroke="#999" fill="none" stroke-width="1.400"/>
<rect x="991" y="122" width="17" height="16" fill="#fff"/><rect x="995" y="128" width="7" height="6" fill="#2d7a3f"/><path d="M991 138l17-16" stroke="#b82a38" stroke-width="1.500"/>
<rect x="981" y="112" width="17" height="17" fill="#fcc5d8" stroke="#ddd"/>
<path d="M987 156l5-3 5 3v6l-5 3-5-3zM987 156l5 3 5-3M992 159v6" fill="#777" stroke="#aaa"/>
<rect x="1003" y="152" width="13" height="12" fill="#fcc5d8" stroke="#ccc"/>
<rect x="981" y="196" width="12" height="13" fill="#fff"/><path d="M981 209l12-13" stroke="#b82a38" stroke-width="1.400"/><rect x="993" y="196" width="12" height="13" fill="#000"/><rect x="1005" y="196" width="13" height="13" fill="#fff"/>

<g font-size="10" font-weight="bold" fill="#b8b8b8"><text x="1025" y="110">C</text><text x="1025" y="134">M</text><text x="1025" y="157">Y</text><text x="1025" y="180">K</text></g>
<rect x="1041" y="103" width="98" height="6" fill="#222"/><rect x="1042" y="104" width="96" height="4" fill="url(#sc)"/>
<rect x="1041" y="126" width="98" height="6" fill="#222"/><rect x="1042" y="127" width="96" height="4" fill="url(#sm)"/>
<rect x="1041" y="150" width="98" height="6" fill="#222"/><rect x="1042" y="151" width="96" height="4" fill="url(#sy)"/>
<rect x="1041" y="173" width="98" height="6" fill="#222"/><rect x="1042" y="174" width="96" height="4" fill="url(#sk)"/>
<g fill="#d0d0d0" stroke="#222" stroke-width=".8"><path d="M1044 109l4 4v3h-8v-3z"/><path d="M1064 132l4 4v3h-8v-3z"/><path d="M1046 155l4 4v3h-8v-3z"/><path d="M1042 178l4 4v3h-8v-3z"/></g>
<g fill="#a8a8a8" stroke="#3a3a3a"><rect x="1144" y="97" width="31" height="17"/><rect x="1144" y="121" width="31" height="17"/><rect x="1144" y="144" width="31" height="17"/><rect x="1144" y="168" width="31" height="17"/></g>
<text class="n" x="1147" y="109">2.03</text><text class="n" x="1146" y="133">22.9</text><text class="n" x="1147" y="156">4.25</text><text class="n" x="1147" y="180">0.05</text>
<g font-size="9" font-weight="bold" fill="#b4b4b4"><text x="1177" y="109">%</text><text x="1177" y="133">%</text><text x="1177" y="156">%</text><text x="1177" y="180">%</text></g>
<rect x="982" y="218" width="203" height="89" fill="#2a2a2a"/>
<rect x="983" y="219" width="201" height="87" fill="url(#hue)"/><rect x="983" y="219" width="201" height="87" fill="url(#lt)"/>

<!-- swatches/transparency -->
<rect x="975" y="316" width="225" height="18" fill="#3e3e3e"/>
<rect x="1087" y="316" width="52" height="18" fill="#4c4c4c"/>
<rect x="975" y="334" width="225" height="98" fill="#4b4b4b"/>
<text class="p" x="982" y="329">色板</text><text class="p" x="1018" y="329">画笔</text><text class="p" x="1056" y="329">符号</text>
<path d="M1091 322l2-2 2 2M1091 326l2 2 2-2" stroke="#ccc" fill="none"/><text class="a" x="1098" y="329">透明度</text>
<path d="M1184 323h3M1189 321h7M1189 324h7M1189 327h7" stroke="#bbb"/>
<rect x="982" y="341" width="79" height="15" fill="#5c5c5c" stroke="#3a3a3a"/><text class="m" x="988" y="352">正常</text><path d="M1051 346h7l-3.500 4z" fill="#ddd"/>
<text class="m" x="1068" y="352">不透明度 :</text>
<rect x="1126" y="340" width="47" height="16" fill="#a6a6a6"/><text x="1127" y="351" font-size="10" fill="#333">100%</text>
<rect x="1175" y="340" width="12" height="16" fill="#5c5c5c"/><path d="M1179 345v6l4-3z" fill="#ddd"/>
<path d="M983 364h168" stroke="#595959"/>
<rect x="982" y="374" width="48" height="48" fill="#3c3c3c"/>
<rect x="983" y="375" width="46" height="46" fill="#fff"/>
<path d="M1006 377c-12 0-18 8-17 17 1 7 6 12 9 20 1 4 3 5 7 5 5 0 7-1 9-5 3-8 9-13 9-21 0-9-7-16-17-16z" fill="#fdbdd0"/>
<rect x="1056" y="375" width="47" height="47" fill="#4a4a4a" stroke="#8a8a8a" stroke-width="1.500"/>
<circle cx="1079" cy="398" r="10" fill="none" stroke="#c8c8c8" stroke-width="3"/><path d="M1072 391l14 14" stroke="#c8c8c8" stroke-width="3"/>
<rect x="1111" y="371" width="64" height="18" fill="#5a5a5a" stroke="#3a3a3a"/><text class="a" x="1120" y="384" style="fill:#c8c8c8">制作蒙版</text>
<rect x="1110" y="397" width="10" height="10" fill="#484848" stroke="#3c3c3c"/><rect x="1110" y="415" width="10" height="10" fill="#484848" stroke="#3c3c3c"/>
<text x="1125" y="406" font-size="11" fill="#737373">剪切</text><text x="1125" y="425" font-size="11" fill="#737373">反相蒙版</text>

<rect x="975" y="436" width="225" height="17" fill="#3e3e3e"/><rect x="1013" y="436" width="40" height="17" fill="#4c4c4c"/>
<text class="p" x="982" y="448">描边</text><path d="M1018 442l2-2 2 2M1018 446l2 2 2-2" stroke="#ccc" fill="none"/><text class="a" x="1024" y="448">渐变</text>
<path d="M1184 442h3M1189 440h7M1189 443h7M1189 446h7" stroke="#bbb"/>
<rect x="975" y="456" width="225" height="17" fill="#3e3e3e"/><rect x="1013" y="456" width="59" height="17" fill="#4c4c4c"/>
<text class="p" x="982" y="469">外观</text><text class="a" x="1019" y="469">图形样式</text>
<path d="M1184 463h3M1189 461h7M1189 464h7M1189 467h7" stroke="#bbb"/>
<rect x="975" y="477" width="225" height="17" fill="#3e3e3e"/><rect x="975" y="477" width="37" height="17" fill="#4c4c4c"/>
<text class="a" x="982" y="490">图层</text><text class="p" x="1018" y="490">画板</text>
<path d="M1184 484h3M1189 482h7M1189 485h7M1189 488h7" stroke="#bbb"/>

<!-- layers -->
<rect x="975" y="494" width="225" height="141" fill="#4b4b4b"/>
<rect x="980" y="499" width="203" height="119" fill="#5a5a5a"/>
<path d="M980 520H1001M1053 520h130M1135 540h48M1140 559h43M980 578h203M1120 598h63" stroke="#414141"/>
<path d="M1001 499v40M1150 499v119" stroke="#444"/>
<rect x="1021" y="499" width="5" height="119" fill="#4f79dc"/>
<g fill="#ddd"><path d="M1071 505v8l5-4zM1071 525v8l5-4zM1071 599v8l5-4z"/></g>
<g fill="#fff" stroke="#222"><rect x="1084" y="502" width="16" height="17"/><rect x="1084" y="522" width="16" height="17"/><rect x="1084" y="541" width="16" height="17"/><rect x="1084" y="561" width="16" height="17"/><rect x="1084" y="580" width="16" height="17"/><rect x="1084" y="600" width="16" height="17"/></g>
<path d="M1086 510h12" stroke="#c8c060" stroke-width="2"/><path d="M1087 535l9-8" stroke="#889" stroke-width="2"/>
<circle cx="1092" cy="549" r="3" fill="#b05070"/><circle cx="1092" cy="568" r="3" fill="#b05070"/><rect x="1088" y="583" width="8" height="9" fill="#a8d8e0"/><path d="M1087 604h10M1087 608h10M1087 612h10" stroke="#aaa"/>
<g fill="none" stroke="#d8d8d8" stroke-width="1.300"><circle cx="1160" cy="510" r="4.500"/><circle cx="1160" cy="530" r="4.500"/><circle cx="1160" cy="549" r="4.500"/><circle cx="1160" cy="569" r="4.500"/><circle cx="1160" cy="589" r="4.500"/><circle cx="1160" cy="608" r="4.500"/></g>
<g fill="#222"><circle cx="1160" cy="510" r="2"/><circle cx="1160" cy="530" r="2"/><circle cx="1160" cy="549" r="2"/><circle cx="1160" cy="569" r="2"/><circle cx="1160" cy="589" r="2"/><circle cx="1160" cy="608" r="2"/></g>
<rect x="1169" y="566" width="6" height="6" rx="2" fill="#2a50c8" stroke="#111"/>
<rect x="1185" y="499" width="10" height="119" fill="#3c3c3c"/><rect x="1185" y="538" width="10" height="13" fill="#999"/>
<path d="M1187 508h6l-3-3zM1187 609h6l-3 3z" fill="#ddd"/>
<!-- watermark -->
<ellipse cx="1017" cy="518" rx="7" ry="10" fill="#d6d6d6" transform="rotate(5 1017 518)"/>
<ellipse cx="1002" cy="533" rx="7.500" ry="10" fill="#d6d6d6"/>
<text x="983" y="574" font-size="48" font-weight="bold" fill="#e4e4e4">id</text>
<text x="1072" y="573" font-size="35" font-weight="bold" fill="#f4f4f4" style="font-family:'Noto Sans CJK SC',sans-serif">至</text>
<text x="982" y="603" font-size="20" fill="#f4f4f4">an.b</text>
<text x="1063" y="603" font-size="20" fill="#f4f4f4">u.c</text>
<ellipse cx="990" cy="568" rx="7" ry="3.500" fill="none" stroke="#ddd"/><ellipse cx="990" cy="589" rx="6" ry="3.500" fill="none" stroke="#ddd"/><ellipse cx="990" cy="608" rx="6" ry="3.500" fill="none" stroke="#ddd"/>
<!-- footer -->
<text x="980" y="632" font-size="11" fill="#bcbcbc">2 个图层</text>
<circle cx="1074" cy="625" r="4" fill="none" stroke="#ddd" stroke-width="1.400"/><path d="M1071 628l-4 4" stroke="#ddd" stroke-width="1.500"/>
<rect x="1091" y="622" width="9" height="9" fill="none" stroke="#ccc" stroke-width="1.300"/><rect x="1094" y="626" width="8" height="7" fill="#bbb"/>
<path d="M1114 627h4M1119 627l6-3v8h5v-8" stroke="#ccc" fill="none"/><rect x="1124" y="624" width="6" height="8" fill="#ccc"/>
<path d="M1142 623h7v9h-7z" fill="#ccc"/><path d="M1142 623h4v4h-4z" fill="#444"/>
<path d="M1165 623h8M1166 625h6v8h-6zM1168 622h2" stroke="#ccc" fill="none" stroke-width="1.300"/>
</svg>
</body></html>
